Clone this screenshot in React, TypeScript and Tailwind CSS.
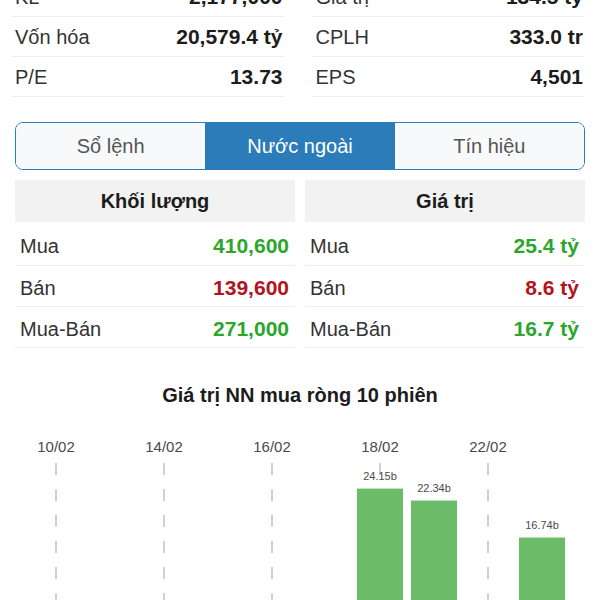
import React from 'react';

const font = { fontFamily: '"Liberation Sans", Arial, sans-serif' };

const overview = [
  [
    { label: 'KL', value: '2,177,000' },
    { label: 'Vốn hóa', value: '20,579.4 tỷ' },
    { label: 'P/E', value: '13.73' },
  ],
  [
    { label: 'Giá trị', value: '134.5 tỷ' },
    { label: 'CPLH', value: '333.0 tr' },
    { label: 'EPS', value: '4,501' },
  ],
];

const foreign = [
  {
    title: 'Khối lượng',
    rows: [
      { label: 'Mua', value: '410,600', up: true },
      { label: 'Bán', value: '139,600', up: false },
      { label: 'Mua-Bán', value: '271,000', up: true },
    ],
  },
  {
    title: 'Giá trị',
    rows: [
      { label: 'Mua', value: '25.4 tỷ', up: true },
      { label: 'Bán', value: '8.6 tỷ', up: false },
      { label: 'Mua-Bán', value: '16.7 tỷ', up: true },
    ],
  },
];

const tabs = ['Sổ lệnh', 'Nước ngoài', 'Tín hiệu'];

const sessions = [
  { date: '10/02', value: -3.1 },
  { date: '13/02', value: -5.2 },
  { date: '14/02', value: -1.4 },
  { date: '15/02', value: -2.6 },
  { date: '16/02', value: -4.0 },
  { date: '17/02', value: -0.8 },
  { date: '18/02', value: 24.15 },
  { date: '21/02', value: 22.34 },
  { date: '22/02', value: -1.2 },
  { date: '23/02', value: 16.74 },
];

function NetBuyChart() {
  const slot = 54;
  const left = 29;
  const zero = 217;
  const scale = 6.6;
  return (
    <svg width="600" height="240" className="block">
      {sessions.map((s, i) => {
        const cx = left + slot * i + slot / 2;
        return (
          <g key={s.date}>
            {i % 2 === 0 && (
              <>
                <text x={cx} y={21} textAnchor="middle" fontSize="15" fill="#4a4a4a" style={font}>
                  {s.date}
                </text>
                <line x1={cx} y1={32} x2={cx} y2={240} stroke="#b5b5b5" strokeWidth="1.2" strokeDasharray="12 14" />
              </>
            )}
          </g>
        );
      })}
      {sessions.map((s, i) => {
        if (s.value <= 0) return null;
        const cx = left + slot * i + slot / 2;
        const h = s.value * scale;
        return (
          <g key={s.date + 'bar'}>
            <rect x={cx - 23} y={zero - h} width={46} height={h} fill="#6cbb69" />
            <text x={cx} y={zero - h - 9} textAnchor="middle" fontSize="11" fill="#4a4a4a" style={font}>
              {s.value.toFixed(2)}b
            </text>
          </g>
        );
      })}
    </svg>
  );
}

export default function App() {
  return (
    <div className="w-[600px] h-[600px] overflow-hidden bg-white" style={font}>
      {/* Overview (scrolled, first row cut off) */}
      <div className="-mt-[23px] grid grid-cols-2 gap-x-[29px] pl-[12px] pr-[16px]">
        {overview.map((col, ci) => (
          <div key={ci}>
            {col.map((row) => (
              <div
                key={row.label}
                className="h-[40px] flex items-center justify-between pl-[3px] pr-[1px] border-b border-[#ededed]"
              >
                <span className="text-[20px] text-[#333]">{row.label}</span>
                <span className="text-[21px] font-bold text-[#1c1c1c]">{row.value}</span>
              </div>
            ))}
          </div>
        ))}
      </div>

      {/* Segmented tabs */}
      <div className="mt-[25px] mx-[15px] h-[48px] flex rounded-[8px] border-[1.5px] border-[#2b7cb9] overflow-hidden">
        {tabs.map((t) => (
          <div
            key={t}
            className={
              t === 'Nước ngoài'
                ? 'flex-1 flex items-center justify-center bg-[#2b7cb9] text-white text-[20px]'
                : 'flex-1 flex items-center justify-center bg-[#f8f9fa] text-[#555] text-[20px]'
            }
          >
            {t}
          </div>
        ))}
      </div>

      {/* Foreign trading */}
      <div className="mt-[10px] grid grid-cols-2 gap-x-[10px] px-[15px]">
        {foreign.map((panel) => (
          <div key={panel.title}>
            <div className="h-[42px] flex items-center justify-center bg-[#f2f2f2] text-[20px] font-bold text-[#1c1c1c]">
              {panel.title}
            </div>
            {panel.rows.map((row, ri) => (
              <div
                key={row.label}
                className={
                  ri === 0
                    ? 'h-[44px] pt-[4px] flex items-center justify-between pl-[5px] pr-[6px] border-b border-[#ededed]'
                    : 'h-[41px] pt-[3px] flex items-center justify-between pl-[5px] pr-[6px] border-b border-[#ededed]'
                }
              >
                <span className="text-[20px] text-[#333]">{row.label}</span>
                <span
                  className={
                    row.up
                      ? 'text-[21px] font-bold text-[#2aa72a]'
                      : 'text-[21px] font-bold text-[#b3131d]'
                  }
                >
                  {row.value}
                </span>
              </div>
            ))}
          </div>
        ))}
      </div>

      {/* Chart */}
      <div className="mt-[32px] text-center text-[20px] font-bold text-[#1c1c1c]">
        Giá trị NN mua ròng 10 phiên
      </div>
      <div className="mt-[21px]">
        <NetBuyChart />
      </div>
    </div>
  );
}
